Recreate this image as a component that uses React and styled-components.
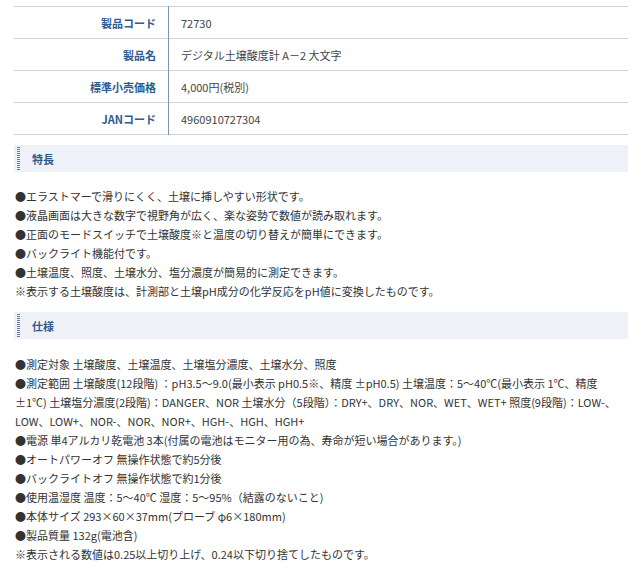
import React from 'react';
import styled, { createGlobalStyle } from 'styled-components';

const Global = createGlobalStyle`
  body { margin: 0; background: #fff; font-family: "Noto Sans CJK JP", "Noto Sans", sans-serif; color: #333; }
`;

const Page = styled.div`
  padding: 6px 12px 0 14px;
`;

const Table = styled.table`
  width: 100%;
  border-collapse: collapse;
  font-size: 11px;
  line-height: 14px;
  border-top: 1px solid #c9d3de;
`;

const Row = styled.tr`
  height: 32px;
  border-bottom: 1px solid #c9d3de;
`;

const Label = styled.th`
  width: 142px;
  text-align: right;
  padding: 0 12px 0 0;
  color: #2f5b8c;
  font-weight: bold;
  border-right: 1px solid #7d93a8;
`;

const Value = styled.td`
  padding: 0 0 0 12px;
  color: #444;
`;

const Heading = styled.div`
  margin: ${p => p.$top}px 0 ${p => p.$bottom}px;
  height: 27px;
  background: #eef2f8;
  display: flex;
  align-items: center;
  font-size: 11px;
  font-weight: bold;
  color: #2f5b8c;
  &::before {
    content: '';
    width: 3px;
    height: 24px;
    margin: 0 12px 0 3px;
    background: repeating-linear-gradient(#5b7fa8 0 1px, transparent 1px 2px);
  }
`;

const Text = styled.div`
  font-size: 11px;
  line-height: 19px;
  color: #333;
  padding-left: 1px;
`;

const rows = [
  ['製品コード', '72730'],
  ['製品名', 'デジタル土壌酸度計 A－2 大文字'],
  ['標準小売価格', '4,000円(税別)'],
  ['JANコード', '4960910727304'],
];

const features = [
  '●エラストマーで滑りにくく、土壌に挿しやすい形状です。',
  '●液晶画面は大きな数字で視野角が広く、楽な姿勢で数値が読み取れます。',
  '●正面のモードスイッチで土壌酸度※と温度の切り替えが簡単にできます。',
  '●バックライト機能付です。',
  '●土壌温度、照度、土壌水分、塩分濃度が簡易的に測定できます。',
  '※表示する土壌酸度は、計測部と土壌pH成分の化学反応をpH値に変換したものです。',
];

const specs = [
  '●測定対象 土壌酸度、土壌温度、土壌塩分濃度、土壌水分、照度',
  '●測定範囲 土壌酸度(12段階) ：pH3.5～9.0(最小表示 pH0.5※、精度 ±pH0.5) 土壌温度：5～40℃(最小表示 1℃、精度±1℃) 土壌塩分濃度(2段階)：DANGER、NOR 土壌水分（5段階）：DRY+、DRY、NOR、WET、WET+ 照度(9段階)：LOW-、LOW、LOW+、NOR-、NOR、NOR+、HGH-、HGH、HGH+',
  '●電源 単4アルカリ乾電池 3本(付属の電池はモニター用の為、寿命が短い場合があります。)',
  '●オートパワーオフ 無操作状態で約5分後',
  '●バックライトオフ 無操作状態で約1分後',
  '●使用温湿度 温度：5～40℃ 湿度：5～95%（結露のないこと)',
  '●本体サイズ 293×60×37mm(プローブ φ6×180mm)',
  '●製品質量 132g(電池含)',
  '※表示される数値は0.25以上切り上げ、0.24以下切り捨てしたものです。',
];

export default function App() {
  return (
    <Page>
      <Global />
      <Table>
        <tbody>
          {rows.map(([k, v]) => (
            <Row key={k}><Label>{k}</Label><Value>{v}</Value></Row>
          ))}
        </tbody>
      </Table>
      <Heading $top={10} $bottom={15}>特長</Heading>
      {features.map(t => <Text key={t}>{t}</Text>)}
      <Heading $top={11} $bottom={16}>仕様</Heading>
      {specs.map(t => <Text key={t}>{t}</Text>)}
    </Page>
  );
}
